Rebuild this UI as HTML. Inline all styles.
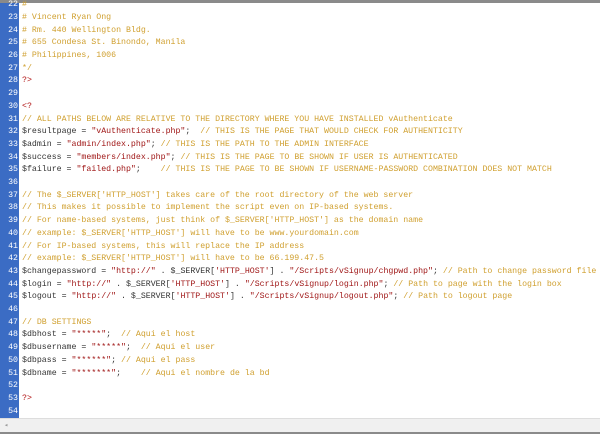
<!DOCTYPE html>
<html><head><style>
body{margin:0;width:600px;height:437px;background:#fff;overflow:hidden;position:relative;font-family:"Liberation Mono",monospace;}
#top{position:absolute;left:0;top:0;width:600px;height:3px;background:#8a8a8a;}
#gut{position:absolute;left:0;top:3px;width:19px;height:415px;background:#3b6cc4;}
.l{position:absolute;left:0;height:13px;line-height:13px;font-size:8.25px;white-space:pre;width:600px;}
.n{display:inline-block;width:18px;text-align:right;color:#fff;margin-right:4px;}
.c{color:#d0a030}.s{color:#a01818}.v{color:#333}.p{color:#b01010}
#sb{position:absolute;left:0;top:418px;width:600px;height:13px;background:#f0f0f0;border-top:1px solid #ddd;}
#bb{position:absolute;left:0;top:432px;width:600px;height:2px;background:#8a8a8a;}
#sb span{position:absolute;left:4px;top:2px;font-size:7px;color:#999;}
</style></head><body>
<div id="top"></div><div id="gut"></div>
<div class="l" style="top:-2px"><span class="n">22</span><span class="c">#</span></div>
<div class="l" style="top:11px"><span class="n">23</span><span class="c"># Vincent Ryan Ong</span></div>
<div class="l" style="top:24px"><span class="n">24</span><span class="c"># Rm. 440 Wellington Bldg.</span></div>
<div class="l" style="top:36px"><span class="n">25</span><span class="c"># 655 Condesa St. Binondo, Manila</span></div>
<div class="l" style="top:49px"><span class="n">26</span><span class="c"># Philippines, 1006</span></div>
<div class="l" style="top:62px"><span class="n">27</span><span class="c">*/</span></div>
<div class="l" style="top:74px"><span class="n">28</span><span class="p">?&gt;</span></div>
<div class="l" style="top:87px"><span class="n">29</span></div>
<div class="l" style="top:100px"><span class="n">30</span><span class="p">&lt;?</span></div>
<div class="l" style="top:113px"><span class="n">31</span><span class="c">// ALL PATHS BELOW ARE RELATIVE TO THE DIRECTORY WHERE YOU HAVE INSTALLED vAuthenticate</span></div>
<div class="l" style="top:125px"><span class="n">32</span><span class="v">$resultpage = </span><span class="s">"vAuthenticate.php"</span><span class="v">;  </span><span class="c">// THIS IS THE PAGE THAT WOULD CHECK FOR AUTHENTICITY</span></div>
<div class="l" style="top:138px"><span class="n">33</span><span class="v">$admin = </span><span class="s">"admin/index.php"</span><span class="v">; </span><span class="c">// THIS IS THE PATH TO THE ADMIN INTERFACE</span></div>
<div class="l" style="top:151px"><span class="n">34</span><span class="v">$success = </span><span class="s">"members/index.php"</span><span class="v">; </span><span class="c">// THIS IS THE PAGE TO BE SHOWN IF USER IS AUTHENTICATED</span></div>
<div class="l" style="top:163px"><span class="n">35</span><span class="v">$failure = </span><span class="s">"failed.php"</span><span class="v">;    </span><span class="c">// THIS IS THE PAGE TO BE SHOWN IF USERNAME-PASSWORD COMBINATION DOES NOT MATCH</span></div>
<div class="l" style="top:176px"><span class="n">36</span></div>
<div class="l" style="top:189px"><span class="n">37</span><span class="c">// The $_SERVER['HTTP_HOST'] takes care of the root directory of the web server</span></div>
<div class="l" style="top:201px"><span class="n">38</span><span class="c">// This makes it possible to implement the script even on IP-based systems.</span></div>
<div class="l" style="top:214px"><span class="n">39</span><span class="c">// For name-based systems, just think of $_SERVER['HTTP_HOST'] as the domain name</span></div>
<div class="l" style="top:227px"><span class="n">40</span><span class="c">// example: $_SERVER['HTTP_HOST'] will have to be www.yourdomain.com</span></div>
<div class="l" style="top:240px"><span class="n">41</span><span class="c">// For IP-based systems, this will replace the IP address</span></div>
<div class="l" style="top:252px"><span class="n">42</span><span class="c">// example: $_SERVER['HTTP_HOST'] will have to be 66.199.47.5</span></div>
<div class="l" style="top:265px"><span class="n">43</span><span class="v">$changepassword = </span><span class="s">"http://"</span><span class="v"> . $_SERVER[</span><span class="s">'HTTP_HOST'</span><span class="v">] . </span><span class="s">"/Scripts/vSignup/chgpwd.php"</span><span class="v">; </span><span class="c">// Path to change password file</span></div>
<div class="l" style="top:278px"><span class="n">44</span><span class="v">$login = </span><span class="s">"http://"</span><span class="v"> . $_SERVER[</span><span class="s">'HTTP_HOST'</span><span class="v">] . </span><span class="s">"/Scripts/vSignup/login.php"</span><span class="v">; </span><span class="c">// Path to page with the login box</span></div>
<div class="l" style="top:290px"><span class="n">45</span><span class="v">$logout = </span><span class="s">"http://"</span><span class="v"> . $_SERVER[</span><span class="s">'HTTP_HOST'</span><span class="v">] . </span><span class="s">"/Scripts/vSignup/logout.php"</span><span class="v">; </span><span class="c">// Path to logout page</span></div>
<div class="l" style="top:303px"><span class="n">46</span></div>
<div class="l" style="top:316px"><span class="n">47</span><span class="c">// DB SETTINGS</span></div>
<div class="l" style="top:328px"><span class="n">48</span><span class="v">$dbhost = </span><span class="s">"*****"</span><span class="v">;  </span><span class="c">// Aqui el host</span></div>
<div class="l" style="top:341px"><span class="n">49</span><span class="v">$dbusername = </span><span class="s">"*****"</span><span class="v">;  </span><span class="c">// Aqui el user</span></div>
<div class="l" style="top:354px"><span class="n">50</span><span class="v">$dbpass = </span><span class="s">"******"</span><span class="v">; </span><span class="c">// Aqui el pass</span></div>
<div class="l" style="top:367px"><span class="n">51</span><span class="v">$dbname = </span><span class="s">"*******"</span><span class="v">;    </span><span class="c">// Aqui el nombre de la bd</span></div>
<div class="l" style="top:379px"><span class="n">52</span></div>
<div class="l" style="top:392px"><span class="n">53</span><span class="p">?&gt;</span></div>
<div class="l" style="top:405px"><span class="n">54</span></div>
<div id="sb"><span>◂</span></div><div id="bb"></div>
</body></html>
